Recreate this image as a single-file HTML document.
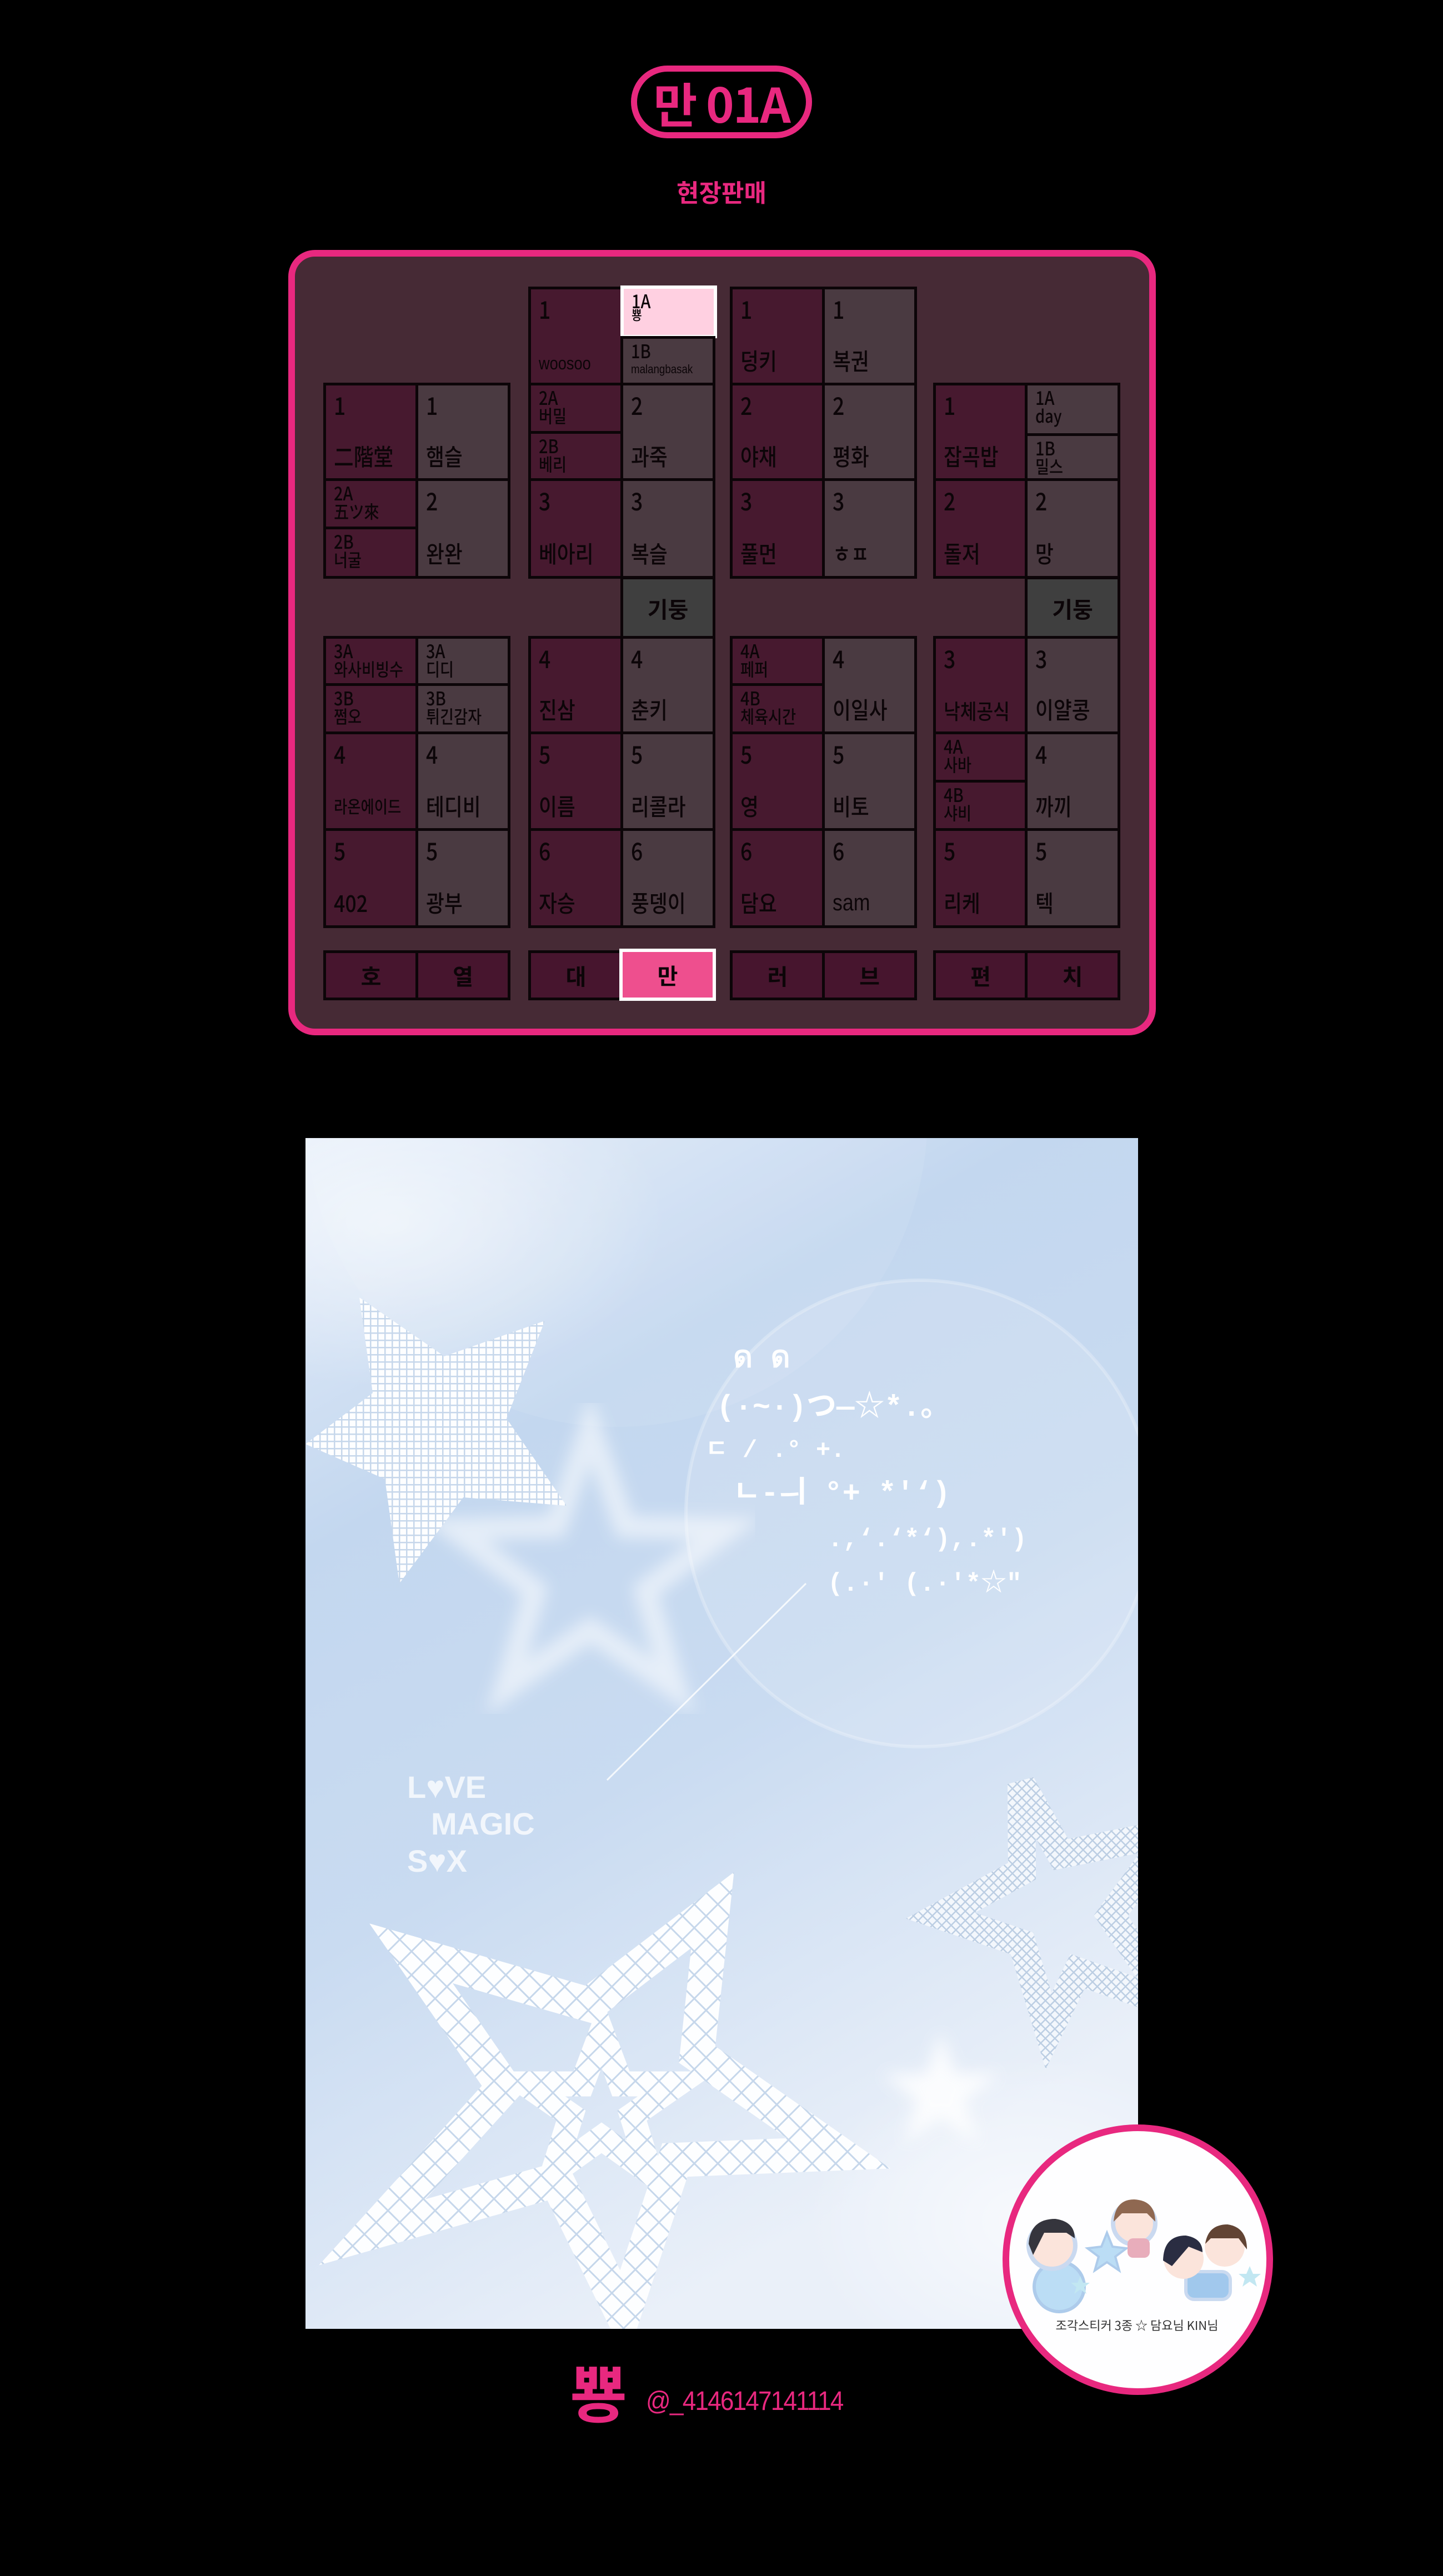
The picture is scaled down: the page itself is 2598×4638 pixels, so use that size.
<!DOCTYPE html>
<html><head><meta charset="utf-8">
<style>
html,body{margin:0;padding:0;background:#000;}
body{width:2598px;height:4638px;position:relative;overflow:hidden;font-family:"Liberation Sans","Noto Sans CJK KR",sans-serif;}
.abs{position:absolute;}
.pill{left:1136px;top:118px;width:326px;height:131px;box-sizing:border-box;border:11px solid #e8287f;border-radius:70px;color:#e8287f;font:bold 86px/110px "Noto Sans CJK KR",sans-serif;text-align:center;letter-spacing:-2px;}
.sub{left:1000px;width:598px;top:312px;text-align:center;color:#e8287f;font:bold 44px "Noto Sans CJK KR",sans-serif;}
.panel{left:519px;top:450px;width:1562px;height:1414px;box-sizing:border-box;border:12px solid #e8287f;border-radius:48px;background:#462a35;}
.c{position:absolute;box-sizing:border-box;border:5px solid #0c0508;color:#0c0508;font-family:"Noto Sans CJK KR",sans-serif;overflow:hidden;}
.d{background:#47192f;}
.g{background:#4a3a41;}
.c .n{position:absolute;left:14px;top:12px;font-size:44px;line-height:1;font-weight:500;transform:scaleX(.85);transform-origin:left;}
.c .t{position:absolute;left:14px;bottom:20px;font-size:42px;line-height:1;font-weight:500;white-space:nowrap;transform:scaleX(.85);transform-origin:left;}
.s .n{top:4px;font-size:34px;}
.s .t{top:38px;bottom:auto;font-size:32px;}
.p{background:#3f3f3f;}
.p span,.b span{position:absolute;left:0;right:0;top:0;bottom:0;display:flex;align-items:center;justify-content:center;font-weight:bold;font-size:40px;}
.b{background:#47152e;}
.hl{background:#ffd0e1;border:6px solid #fff;}
.hm{background:#ee4f8e;border:6px solid #fff;}
</style></head><body>
<div class="abs pill">만 01A</div>
<div class="abs sub">현장판매</div>
<div class="abs panel"></div>

<div class="c d" style="left:951px;top:516px;width:172px;height:179px"><span class="n">1</span><span class="t" style="font-size:32px;font-family:'Liberation Sans',sans-serif">woosoo</span></div>
<div class="c s hl" style="left:1117px;top:514px;width:174px;height:95px"><span class="n">1A</span><span class="t" style="font-size:24px;top:34px">뿅</span></div>
<div class="c s g" style="left:1117px;top:605px;width:171px;height:90px"><span class="n">1B</span><span class="t" style="font-size:22px;top:44px;font-family:'Liberation Sans',sans-serif">malangbasak</span></div>
<div class="c d" style="left:1314px;top:516px;width:172px;height:179px"><span class="n">1</span><span class="t">덩키</span></div>
<div class="c g" style="left:1480px;top:516px;width:171px;height:179px"><span class="n">1</span><span class="t">복권</span></div>

<div class="c d" style="left:582px;top:689px;width:172px;height:178px"><span class="n">1</span><span class="t">二階堂</span></div>
<div class="c g" style="left:748px;top:689px;width:171px;height:178px"><span class="n">1</span><span class="t">햄슬</span></div>
<div class="c s d" style="left:951px;top:689px;width:172px;height:93px"><span class="n">2A</span><span class="t">버밀</span></div>
<div class="c s d" style="left:951px;top:776px;width:172px;height:91px"><span class="n">2B</span><span class="t">베리</span></div>
<div class="c g" style="left:1117px;top:689px;width:171px;height:178px"><span class="n">2</span><span class="t">과죽</span></div>
<div class="c d" style="left:1314px;top:689px;width:172px;height:178px"><span class="n">2</span><span class="t">야채</span></div>
<div class="c g" style="left:1480px;top:689px;width:171px;height:178px"><span class="n">2</span><span class="t">평화</span></div>
<div class="c d" style="left:1680px;top:689px;width:171px;height:178px"><span class="n">1</span><span class="t">잡곡밥</span></div>
<div class="c s g" style="left:1845px;top:689px;width:172px;height:97px"><span class="n">1A</span><span class="t">day</span></div>
<div class="c s g" style="left:1845px;top:780px;width:172px;height:87px"><span class="n">1B</span><span class="t">밀스</span></div>

<div class="c s d" style="left:582px;top:861px;width:172px;height:93px"><span class="n">2A</span><span class="t">五ツ來</span></div>
<div class="c s d" style="left:582px;top:948px;width:172px;height:94px"><span class="n">2B</span><span class="t">너굴</span></div>
<div class="c g" style="left:748px;top:861px;width:171px;height:181px"><span class="n">2</span><span class="t">완완</span></div>
<div class="c d" style="left:951px;top:861px;width:172px;height:181px"><span class="n">3</span><span class="t">베아리</span></div>
<div class="c g" style="left:1117px;top:861px;width:171px;height:181px"><span class="n">3</span><span class="t">복슬</span></div>
<div class="c d" style="left:1314px;top:861px;width:172px;height:181px"><span class="n">3</span><span class="t">풀먼</span></div>
<div class="c g" style="left:1480px;top:861px;width:171px;height:181px"><span class="n">3</span><span class="t">ㅎㅍ</span></div>
<div class="c d" style="left:1680px;top:861px;width:171px;height:181px"><span class="n">2</span><span class="t">돌저</span></div>
<div class="c g" style="left:1845px;top:861px;width:172px;height:181px"><span class="n">2</span><span class="t">망</span></div>

<div class="c p" style="left:1117px;top:1038px;width:171px;height:113px"><span>기둥</span></div>
<div class="c p" style="left:1845px;top:1038px;width:172px;height:113px"><span>기둥</span></div>

<div class="c s d" style="left:582px;top:1145px;width:172px;height:91px"><span class="n">3A</span><span class="t">와사비빙수</span></div>
<div class="c s d" style="left:582px;top:1230px;width:172px;height:93px"><span class="n">3B</span><span class="t">쩜오</span></div>
<div class="c s g" style="left:748px;top:1145px;width:171px;height:91px"><span class="n">3A</span><span class="t">디디</span></div>
<div class="c s g" style="left:748px;top:1230px;width:171px;height:93px"><span class="n">3B</span><span class="t">튀긴감자</span></div>
<div class="c d" style="left:951px;top:1145px;width:172px;height:178px"><span class="n">4</span><span class="t">진삼</span></div>
<div class="c g" style="left:1117px;top:1145px;width:171px;height:178px"><span class="n">4</span><span class="t">춘키</span></div>
<div class="c s d" style="left:1314px;top:1145px;width:172px;height:91px"><span class="n">4A</span><span class="t">페퍼</span></div>
<div class="c s d" style="left:1314px;top:1230px;width:172px;height:93px"><span class="n">4B</span><span class="t">체육시간</span></div>
<div class="c g" style="left:1480px;top:1145px;width:171px;height:178px"><span class="n">4</span><span class="t">이일사</span></div>
<div class="c d" style="left:1680px;top:1145px;width:171px;height:178px"><span class="n">3</span><span class="t" style="font-size:38px">낙체공식</span></div>
<div class="c g" style="left:1845px;top:1145px;width:172px;height:178px"><span class="n">3</span><span class="t">이얄콩</span></div>

<div class="c d" style="left:582px;top:1317px;width:172px;height:180px"><span class="n">4</span><span class="t" style="font-size:31px;bottom:26px">라온에이드</span></div>
<div class="c g" style="left:748px;top:1317px;width:171px;height:180px"><span class="n">4</span><span class="t">테디비</span></div>
<div class="c d" style="left:951px;top:1317px;width:172px;height:180px"><span class="n">5</span><span class="t">이름</span></div>
<div class="c g" style="left:1117px;top:1317px;width:171px;height:180px"><span class="n">5</span><span class="t">리콜라</span></div>
<div class="c d" style="left:1314px;top:1317px;width:172px;height:180px"><span class="n">5</span><span class="t">영</span></div>
<div class="c g" style="left:1480px;top:1317px;width:171px;height:180px"><span class="n">5</span><span class="t">비토</span></div>
<div class="c s d" style="left:1680px;top:1317px;width:171px;height:93px"><span class="n">4A</span><span class="t">사바</span></div>
<div class="c s d" style="left:1680px;top:1404px;width:171px;height:93px"><span class="n">4B</span><span class="t">샤비</span></div>
<div class="c g" style="left:1845px;top:1317px;width:172px;height:180px"><span class="n">4</span><span class="t">까끼</span></div>

<div class="c d" style="left:582px;top:1491px;width:172px;height:180px"><span class="n">5</span><span class="t">402</span></div>
<div class="c g" style="left:748px;top:1491px;width:171px;height:180px"><span class="n">5</span><span class="t">광부</span></div>
<div class="c d" style="left:951px;top:1491px;width:172px;height:180px"><span class="n">6</span><span class="t">자승</span></div>
<div class="c g" style="left:1117px;top:1491px;width:171px;height:180px"><span class="n">6</span><span class="t">풍뎅이</span></div>
<div class="c d" style="left:1314px;top:1491px;width:172px;height:180px"><span class="n">6</span><span class="t">담요</span></div>
<div class="c g" style="left:1480px;top:1491px;width:171px;height:180px"><span class="n">6</span><span class="t" style="font-family:'Liberation Sans',sans-serif">sam</span></div>
<div class="c d" style="left:1680px;top:1491px;width:171px;height:180px"><span class="n">5</span><span class="t">리케</span></div>
<div class="c g" style="left:1845px;top:1491px;width:172px;height:180px"><span class="n">5</span><span class="t">텍</span></div>

<div class="c b" style="left:582px;top:1711px;width:172px;height:90px"><span>호</span></div>
<div class="c b" style="left:748px;top:1711px;width:171px;height:90px"><span>열</span></div>
<div class="c b" style="left:951px;top:1711px;width:172px;height:90px"><span>대</span></div>
<div class="c hm" style="left:1115px;top:1708px;width:174px;height:94px"><span style="position:absolute;inset:0;display:flex;align-items:center;justify-content:center;font-weight:bold;font-size:40px">만</span></div>
<div class="c b" style="left:1314px;top:1711px;width:172px;height:90px"><span>러</span></div>
<div class="c b" style="left:1480px;top:1711px;width:171px;height:90px"><span>브</span></div>
<div class="c b" style="left:1680px;top:1711px;width:171px;height:90px"><span>편</span></div>
<div class="c b" style="left:1845px;top:1711px;width:172px;height:90px"><span>치</span></div>

<svg class="abs" style="left:550px;top:2049px" width="1499" height="2144" viewBox="0 0 1499 2144">
<defs>
<linearGradient id="bg" x1="0" y1="0" x2="0.4" y2="1">
<stop offset="0" stop-color="#e6eefa"/><stop offset="0.3" stop-color="#c3d7ef"/><stop offset="0.6" stop-color="#c9dbf1"/><stop offset="1" stop-color="#eaf0f9"/>
</linearGradient>
<radialGradient id="glow" cx="0.5" cy="0.5" r="0.5"><stop offset="0" stop-color="#fff" stop-opacity=".9"/><stop offset="1" stop-color="#fff" stop-opacity="0"/></radialGradient>
<pattern id="sq" width="13" height="13" patternUnits="userSpaceOnUse"><rect width="13" height="13" fill="#c6d7eb"/><rect x="1.5" y="1.5" width="10.5" height="10.5" fill="#fdfeff"/></pattern>
<pattern id="dia" width="30" height="30" patternUnits="userSpaceOnUse" patternTransform="rotate(45)"><rect width="30" height="30" fill="#c6d7eb"/><rect x="2" y="2" width="27" height="27" fill="#fdfeff"/></pattern>
<pattern id="sq2" width="12" height="12" patternUnits="userSpaceOnUse" patternTransform="rotate(45)"><rect width="12" height="12" fill="#bccee3"/><rect x="1.5" y="1.5" width="9.5" height="9.5" fill="#f3f7fc"/></pattern>
<filter id="bl"><feGaussianBlur stdDeviation="14"/></filter>
</defs>
<rect width="1499" height="2144" fill="url(#bg)"/>
<ellipse cx="1300" cy="1950" rx="400" ry="300" fill="url(#glow)" opacity=".7"/>
<ellipse cx="150" cy="150" rx="500" ry="300" fill="url(#glow)" opacity=".6"/>
<circle cx="1105" cy="676" r="420" fill="#fff" fill-opacity=".12" stroke="#fff" stroke-opacity=".25" stroke-width="6"/>
<circle cx="560" cy="-40" r="560" fill="#fff" fill-opacity=".08"/>
<polygon points="513,524 575,700 760,704 612,815 665,990 513,885 361,990 414,815 266,704 451,700" fill="none" stroke="#fff" stroke-opacity=".55" stroke-width="40" filter="url(#bl)"/>
<polygon points="97,287 250,393 431,329 362,505 470,662 284,647 169,802 143,614 0,551 121,459" fill="url(#sq)"/>
<line x1="543" y1="1156" x2="901" y2="802" stroke="#fff" stroke-opacity=".8" stroke-width="3"/>
<g fill="#fff" font-family="'Liberation Mono','Noto Sans CJK JP',monospace" font-weight="bold" font-size="54">
<text x="770" y="412">ด ด</text>
<text x="740" y="500">(·~·)つ—☆*.。</text>
<text x="720" y="574" font-size="44">ㄷ    /    .°  +.</text>
<text x="770" y="655">ㄴ-ㅢ    °+ *'‘)</text>
<text x="940" y="735" font-size="46">.,‘.‘*‘),.*')</text>
<text x="940" y="815" font-size="46">(.·' (.·'*☆"</text>
</g>
<g fill="#fff" fill-opacity=".75" font-family="'Liberation Sans',sans-serif" font-weight="bold" font-size="56">
<text x="183" y="1188">L♥VE</text>
<text x="226" y="1254">MAGIC</text>
<text x="183" y="1321">S♥X</text>
</g>
<polygon points="1289,1163 1360,1290 1560,1250 1450,1400 1560,1560 1390,1500 1338,1608 1290,1450 1143,1400 1290,1320" fill="none" stroke="url(#sq2)" stroke-width="50"/>
<polygon points="1144,1609 1170,1685 1250,1686 1186,1733 1210,1810 1144,1763 1078,1810 1102,1733 1038,1686 1118,1685" fill="#fff" opacity=".85" filter="url(#bl)"/>
<polygon points="733,1390 705,1650 960,1828 665,1840 572,2120 452,1876 120,1970 357,1709 190,1468 510,1560" fill="none" stroke="url(#dia)" stroke-width="62" stroke-linejoin="miter"/>
<polygon points="533,1610 568,1703 670,1703 588,1760 620,1862 533,1800 446,1862 478,1760 396,1703 498,1703" fill="none" stroke="url(#dia)" stroke-width="45"/>
</svg>

<div class="abs" style="left:1805px;top:3825px;width:487px;height:487px;box-sizing:border-box;border:12px solid #e8287f;border-radius:50%;background:#fefeff;overflow:hidden">
<svg width="463" height="463" viewBox="1817 3837 463 463" style="position:absolute;left:0;top:0">
<g opacity=".95">
<circle cx="1907" cy="4117" r="45" fill="#b8dcf5" stroke="#a9c9ea" stroke-width="6"/>
<circle cx="1894" cy="4043" r="42" fill="#fbe3da" stroke="#c8d8f0" stroke-width="8"/>
<path d="M1852 4040 Q1855 3995 1900 3995 Q1935 4000 1935 4030 L1920 4020 L1880 4020 L1860 4060 Z" fill="#2b2b33"/>
<path d="M1993 4020 L2003 4045 L2028 4048 L2008 4063 L2015 4088 L1993 4073 L1971 4088 L1978 4063 L1958 4048 L1983 4045 Z" fill="#b8dcf5" stroke="#a9c9ea" stroke-width="4"/>
<circle cx="2042" cy="4003" r="38" fill="#fbe3da" stroke="#c8d8f0" stroke-width="8"/>
<path d="M2005 4000 Q2008 3960 2042 3960 Q2080 3962 2080 4000 L2065 3985 L2020 3985 Z" fill="#8a6048"/>
<rect x="2030" y="4030" width="40" height="35" rx="10" fill="#e7a9b8"/>
<rect x="2135" y="4090" width="80" height="50" rx="15" fill="#9cc6ec" stroke="#c8d8f0" stroke-width="6"/>
<circle cx="2131" cy="4067" r="36" fill="#fbe3da"/>
<path d="M2094 4070 Q2095 4025 2135 4025 Q2165 4030 2165 4055 L2140 4045 L2110 4080 Z" fill="#1f2238"/>
<circle cx="2205" cy="4045" r="36" fill="#fbe3da"/>
<path d="M2170 4040 Q2175 4005 2210 4005 Q2245 4010 2245 4050 L2230 4030 L2180 4030 Z" fill="#5a3a2a"/>
<polygon points="1945,4098 1950,4110 1962,4110 1952,4118 1956,4130 1945,4122 1934,4130 1938,4118 1928,4110 1940,4110" fill="#bfe6f2"/>
<polygon points="2250,4080 2256,4094 2270,4094 2259,4103 2263,4117 2250,4108 2237,4117 2241,4103 2230,4094 2244,4094" fill="#bfe6f2"/>
</g>
<text x="2047" y="4195" text-anchor="middle" font-family="'Noto Sans CJK KR',sans-serif" font-size="22" fill="#333">조각스티커 3종 ☆ 담요님 KIN님</text>
</svg>
</div>

<div class="abs" style="left:1026px;top:4248px;color:#e8287f;font:bold 112px/1 'Noto Sans CJK KR',sans-serif">뿅</div>
<div class="abs" style="left:1163px;top:4300px;color:#e8287f;font:300 48px/1 'Liberation Sans',sans-serif;letter-spacing:-2px;transform:scaleX(.92);transform-origin:left">@_4146147141114</div>
</body></html>
